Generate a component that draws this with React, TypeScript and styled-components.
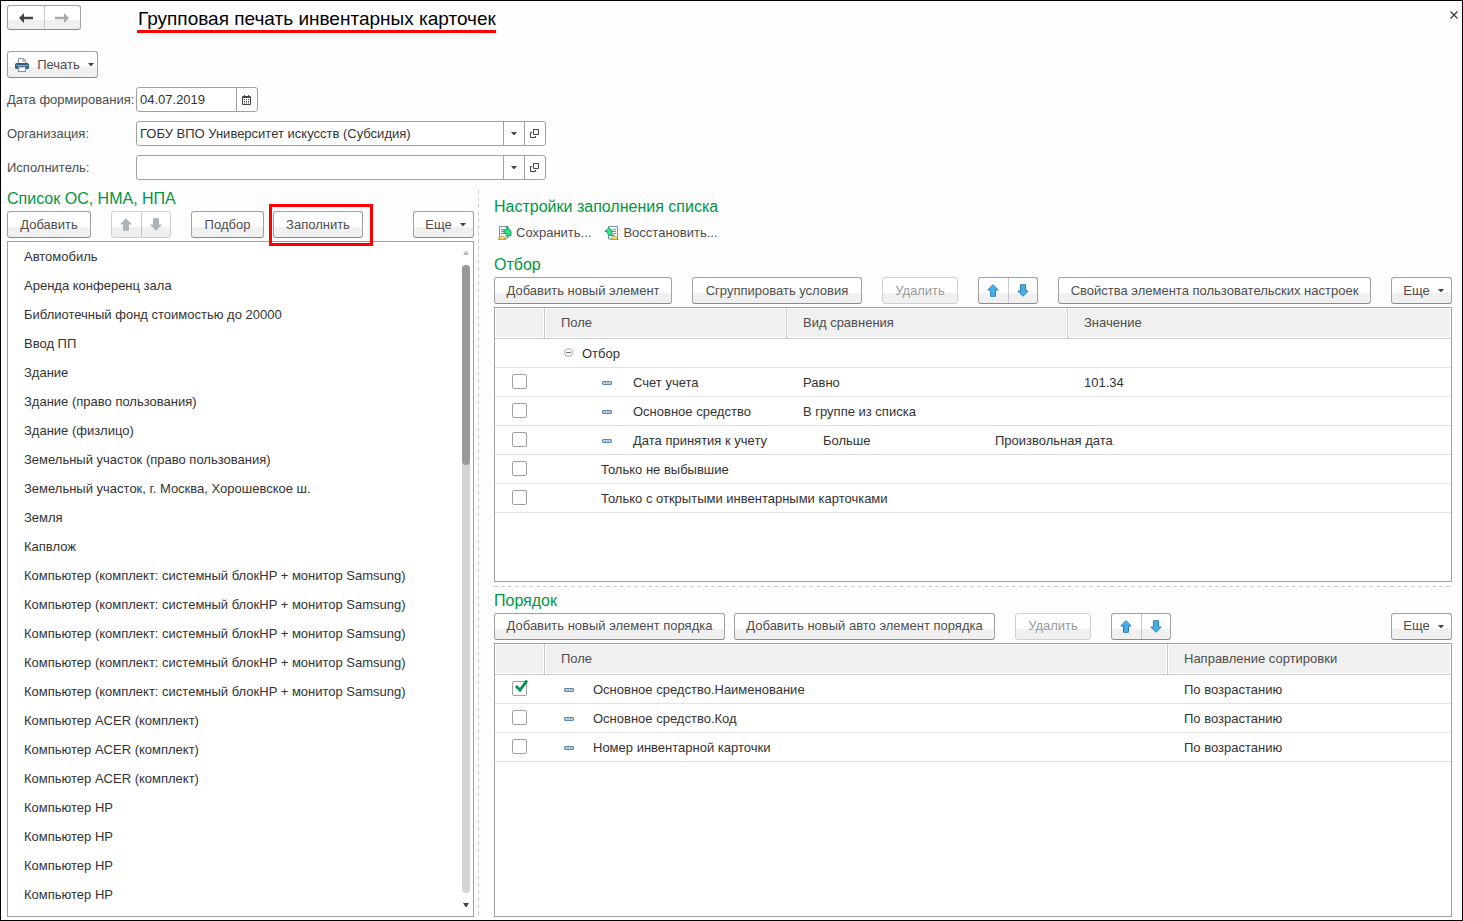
import React from "react";
import styled, { createGlobalStyle, css } from "styled-components";

const line = "#a0a0a0";
const softLine = "#c8c8c8";
const rowLine = "#e2e2e2";
const green = "#009646";
const ink = "#333333";
const inkSoft = "#4d4d4d";

const GlobalStyle = createGlobalStyle`
  *, *::before, *::after { box-sizing: border-box; }
  body {
    margin: 0;
    background: #fff;
    color: ${ink};
    font: 13px/16px "Liberation Sans", Arial, sans-serif;
  }
  button, input { font: inherit; color: inherit; }
`;

const Window = styled.div`
  display: flex;
  flex-direction: column;
  min-height: 100vh;
  padding: 4px 10px 3px 6px;
  border: 1px solid #000;
  background: #fdfdfd;
`;

const TitleBar = styled.header`
  display: flex;
  align-items: flex-start;
  height: 46px;
`;

const Title = styled.h1`
  margin: 0 0 0 56px;
  padding: 3px 0 0 1px;
  border-bottom: 3px solid #f00;
  color: #000;
  font-size: 19px;
  font-weight: 400;
  line-height: 22px;
`;

const CloseButton = styled.button`
  display: flex;
  margin: 6px -6px 0 auto;
  padding: 0;
  border: 0;
  background: none;
`;

const face = css`
  border: 1px solid ${line};
  border-bottom-color: #8a8a8a;
  border-radius: 3px;
  background: linear-gradient(#fff 0 62%, #f0f0f0 62% 100%);
`;

const Button = styled.button<{ $width: number }>`
  ${face}
  display: flex;
  flex: none;
  align-items: center;
  justify-content: center;
  width: ${(p) => p.$width}px;
  height: 27px;
  padding: 0;
  color: ${inkSoft};
  white-space: nowrap;
  &:disabled {
    border-color: #d0d0d0;
    color: #999;
  }
`;

const MenuButton = styled(Button)`
  gap: 8px;
  padding-left: 4px;
`;

const Pair = styled.div<{ $width: number; $height: number; $muted?: boolean }>`
  ${face}
  display: flex;
  flex: none;
  width: ${(p) => p.$width}px;
  height: ${(p) => p.$height}px;
  ${(p) => p.$muted && "border-color: #d0d0d0;"}
`;

const PairButton = styled.button`
  display: flex;
  flex: 1;
  align-items: center;
  justify-content: center;
  padding: 0;
  border: 0;
  background: none;
  & + & {
    border-left: 1px solid ${softLine};
  }
`;

const Fields = styled.div`
  display: grid;
  grid-template-columns: 129px 410px;
  grid-auto-rows: 25px;
  row-gap: 9px;
  align-items: center;
  margin-top: 9px;
`;

const Label = styled.label`
  color: ${inkSoft};
`;

const Field = styled.div<{ $width: number }>`
  display: flex;
  width: ${(p) => p.$width}px;
  height: 25px;
  border: 1px solid ${line};
  border-radius: 3px;
  background: #fff;
`;

const FieldInput = styled.input`
  flex: 1;
  min-width: 0;
  padding: 0 3px;
  border: 0;
  outline: 0;
  background: none;
`;

const FieldButton = styled.button`
  display: flex;
  flex: none;
  align-items: center;
  justify-content: center;
  width: 21px;
  padding: 0 1px 0 0;
  border: 0;
  border-left: 1px solid ${line};
  background: none;
`;

const Panes = styled.main`
  display: grid;
  flex: 1;
  grid-template-columns: minmax(0, 467fr) 20px minmax(0, 958fr);
  margin-top: 10px;
`;

const Splitter = styled.div`
  width: 1px;
  margin-left: 4px;
  background: repeating-linear-gradient(#d0d0d0 0 4px, transparent 4px 7px);
`;

const HorizontalSplitter = styled.div`
  height: 1px;
  margin: 4px 0 5px;
  background: repeating-linear-gradient(90deg, #d0d0d0 0 4px, transparent 4px 7px);
`;

const Column = styled.section`
  display: flex;
  flex-direction: column;
  min-width: 0;
`;

const SettingsColumn = styled(Column)`
  padding-top: 8px;
`;

const Heading = styled.h2`
  margin: 0;
  color: ${green};
  font-size: 16px;
  font-weight: 400;
  line-height: 18px;
`;

const Toolbar = styled.div`
  display: flex;
  align-items: flex-start;
  gap: 20px;
  height: 30px;
  margin-top: 3px;
  & > :last-child {
    margin-left: auto;
  }
`;

const ButtonSet = styled.div`
  display: flex;
  gap: 9px;
`;

const Marked = styled.div`
  position: relative;
  &::after {
    content: "";
    position: absolute;
    inset: -7px -10px -8px -4px;
    border: 3px solid #f00;
    pointer-events: none;
  }
`;

const ListFrame = styled.div`
  display: flex;
  flex: 1;
  border: 1px solid ${line};
  background: #fff;
`;

const List = styled.ul`
  flex: 1;
  margin: 0;
  padding: 0;
  list-style: none;
`;

const ListItem = styled.li`
  padding-left: 16px;
  line-height: 29px;
`;

const ScrollBar = styled.div`
  display: flex;
  flex-direction: column;
  align-items: center;
  width: 14px;
  padding: 9px 0;
`;

const ScrollTrack = styled.div`
  flex: 1;
  width: 8px;
  margin: 10px 0;
  border-radius: 4px;
  background: #d4d4d4;
`;

const ScrollThumb = styled.div`
  height: 200px;
  border-radius: 4px;
  background: #999;
`;

const SettingsLinks = styled.div`
  display: flex;
  gap: 13px;
  height: 16px;
  margin: 9px 0 15px 3px;
`;

const SettingsLink = styled.a`
  display: flex;
  align-items: center;
  gap: 3px;
  color: ${inkSoft};
  text-decoration: none;
`;

const TableFrame = styled.div`
  flex: 1 1 0;
  border: 1px solid ${line};
  background: #fff;
`;

const Table = styled.table`
  width: 100%;
  table-layout: fixed;
  border-collapse: separate;
  border-spacing: 0;
`;

const HeadCell = styled.th`
  height: 31px;
  padding: 0 0 0 16px;
  border: 0 solid ${softLine};
  border-width: 0 1px 1px 0;
  background: #f0f0f0;
  box-shadow: inset 0 0 0 1px #fff;
  color: ${inkSoft};
  font-weight: 400;
  text-align: left;
  &:last-child {
    border-right-width: 0;
  }
`;

const Cell = styled.td<{ $indent?: number }>`
  height: 29px;
  padding: 2px 0 0 ${(p) => p.$indent ?? 16}px;
  border-bottom: 1px solid ${rowLine};
  white-space: nowrap;
`;

const Entry = styled.div<{ $gap: number }>`
  display: flex;
  align-items: center;
  gap: ${(p) => p.$gap}px;
`;

const PeriodCondition = styled.div`
  display: grid;
  grid-template-columns: 172px auto;
  padding-left: 20px;
`;

const CheckWrap = styled.span`
  position: relative;
  display: block;
  width: 15px;
  height: 15px;
  margin-bottom: 3px;
  svg {
    position: absolute;
    left: 2px;
    top: -2px;
    pointer-events: none;
  }
`;

const CheckInput = styled.input`
  display: block;
  width: 15px;
  height: 15px;
  margin: 0;
  appearance: none;
  border: 1px solid ${line};
  border-radius: 2px;
  background: #fff;
`;

function Check({ label, checked = false }: { label: string; checked?: boolean }) {
  const [on, setOn] = React.useState(checked);
  return (
    <CheckWrap>
      <CheckInput type="checkbox" aria-label={label} checked={on} onChange={() => setOn(!on)} />
      {on && (
        <svg width="15" height="14" viewBox="0 0 15 14">
          <path d="M2 7l4 4L13 1.500" fill="none" stroke={green} strokeWidth="2.800" />
        </svg>
      )}
    </CheckWrap>
  );
}

const Caret = () => (
  <svg width="6" height="3" viewBox="0 0 6 3">
    <path d="M0 0h6L3.500 3h-1z" fill="#444" />
  </svg>
);

const NavArrow = ({ back, color }: { back?: boolean; color: string }) => (
  <svg width="14" height="10" viewBox="0 0 14 10">
    <path
      d={back ? "M0 5L5 0V3.800H14V6.200H5V10z" : "M14 5L9 0V3.800H0V6.200H9V10z"}
      fill={color}
    />
  </svg>
);

const MoveArrow = ({ down, muted }: { down?: boolean; muted?: boolean }) => (
  <svg width="12" height="13" viewBox="0 0 12 13">
    <path
      d={down ? "M6 12.300L0.800 7H3.500V0.700H8.500V7H11.200z" : "M6 0.700L11.200 6H8.500V12.300H3.500V6H0.800z"}
      fill={muted ? "#a9b4bb" : "#45b0ea"}
      stroke={muted ? "#a9b4bb" : "#2f7fb5"}
    />
  </svg>
);

const PrinterIcon = () => (
  <svg width="14" height="14" viewBox="0 0 14 14">
    <path d="M3.500 6V0.500H8.500L10.500 2.500V6" fill="#fff" stroke="#8794a0" />
    <path d="M8 0.500V3H10.500" fill="none" stroke="#8794a0" />
    <rect x="0" y="5" width="14" height="6" rx="1.500" fill="#2f5f85" />
    <path d="M1 7.500H13" stroke="#7fa6c4" />
    <rect x="3.500" y="9" width="7" height="4.500" fill="#fff" stroke="#8794a0" />
  </svg>
);

const CalendarIcon = () => (
  <svg width="9" height="10" viewBox="0 0 9 10">
    <path d="M0.500 1.500H8.500V9.500H0.500z" fill="#fff" stroke="#444" />
    <path d="M0 2.500H9M2.500 0V2M6.500 0V2" stroke="#444" />
    <path d="M2 4.500H7.500M2 6.500H7.500M2 8H7.500" stroke="#444" strokeDasharray="1 1" />
  </svg>
);

const OpenIcon = () => (
  <svg width="9" height="9" viewBox="0 0 9 9">
    <path d="M3.500 0.500H8.500V5.500H3.500zM2 3.500H0.500V8.500H5.500V7" fill="none" stroke="#444" />
  </svg>
);

const CloseIcon = () => (
  <svg width="8" height="8" viewBox="0 0 8 8">
    <path d="M0.500 0.500L7.500 7.500M7.500 0.500L0.500 7.500" stroke="#333" strokeWidth="1.100" />
  </svg>
);

const ScrollArrow = ({ down }: { down?: boolean }) => (
  <svg width="6" height="4" viewBox="0 0 6 4">
    <path d={down ? "M0 0H6L3.500 4H2.500z" : "M0 4H6L3.500 0H2.500z"} fill={down ? "#444" : "#bbb"} />
  </svg>
);

const SettingsIcon = ({ restore }: { restore?: boolean }) => (
  <svg width="16" height="16" viewBox="0 0 16 16">
    <path d={restore ? "M4.500 1.500H13.500V14H4.500z" : "M2.500 1.500H11V13H2.500z"} fill="#f4f8fa" stroke="#7d929c" />
    <path d={restore ? "M9 4.500H12M9 6.500H12M9 8.500H12" : "M4 4.500H7M4 6.500H7M4 8.500H7"} stroke="#7d929c" />
    {restore ? (
      <path d="M5 2.500L9 6.500H7.500C7.500 8.500 8 9.500 9.500 10.500C6 11.500 3.500 10 3 6.500H0.800z" fill="#2fe08a" stroke="#12864a" strokeWidth="0.800" />
    ) : (
      <path d="M9.500 1.500L13 5C14.500 7 14.500 9 13.500 11H8.500C10 10.500 10.500 9.500 10 8.500H7V5L9.500 4.500z" fill="#2fe08a" stroke="#12864a" strokeWidth="0.800" />
    )}
    <path d={restore ? "M10.500 10.500L14.500 14.500H6.500z" : "M5 10.500L9 14.500H1z"} fill="#fbdc63" stroke="#b8912a" strokeWidth="0.800" />
  </svg>
);

const DashIcon = () => (
  <svg width="10" height="4" viewBox="0 0 10 4">
    <rect x="0.500" y="0.500" width="9" height="3" rx="0.500" fill="#b4cad9" stroke="#5f89a8" />
  </svg>
);

const CollapseIcon = () => (
  <svg width="9" height="12" viewBox="0 0 9 12">
    <circle cx="4.500" cy="4.500" r="4" fill="#fff" stroke="#aaa" />
    <path d="M2 4.500H7" stroke="#777" />
  </svg>
);

const MoveButtons = ({ muted }: { muted?: boolean }) => (
  <Pair $width={60} $height={27} $muted={muted}>
    <PairButton aria-label="Вверх" disabled={muted}><MoveArrow muted={muted} /></PairButton>
    <PairButton aria-label="Вниз" disabled={muted}><MoveArrow down muted={muted} /></PairButton>
  </Pair>
);

const More = () => (
  <MenuButton $width={61}>Еще<Caret /></MenuButton>
);

const Combo = ({ id, value }: { id: string; value: string }) => (
  <Field $width={410}>
    <FieldInput id={id} defaultValue={value} />
    <FieldButton aria-label="Выбрать"><Caret /></FieldButton>
    <FieldButton aria-label="Открыть"><OpenIcon /></FieldButton>
  </Field>
);

const assets = [
  "Автомобиль",
  "Аренда конференц зала",
  "Библиотечный фонд стоимостью до 20000",
  "Ввод ПП",
  "Здание",
  "Здание (право пользования)",
  "Здание (физлицо)",
  "Земельный участок (право пользования)",
  "Земельный участок, г. Москва, Хорошевское ш.",
  "Земля",
  "Капвлож",
  ...Array(5).fill("Компьютер (комплект: системный блокHP + монитор Samsung)"),
  ...Array(3).fill("Компьютер ACER (комплект)"),
  ...Array(4).fill("Компьютер HP"),
];

const filters = [
  { field: "Счет учета", kind: "Равно", value: "101.34" },
  { field: "Основное средство", kind: "В группе из списка", value: "" },
  { field: "Дата принятия к учету", kind: "Больше", value: "Произвольная дата", period: true },
];

const flags = ["Только не выбывшие", "Только с открытыми инвентарными карточками"];

const orders = [
  { field: "Основное средство.Наименование", on: true },
  { field: "Основное средство.Код", on: false },
  { field: "Номер инвентарной карточки", on: false },
];

export default function App() {
  return (
    <Window>
      <GlobalStyle />
      <TitleBar>
        <Pair $width={74} $height={25}>
          <PairButton aria-label="Назад"><NavArrow back color="#444" /></PairButton>
          <PairButton aria-label="Вперед"><NavArrow color="#aaa" /></PairButton>
        </Pair>
        <Title>Групповая печать инвентарных карточек</Title>
        <CloseButton aria-label="Закрыть"><CloseIcon /></CloseButton>
      </TitleBar>

      <MenuButton $width={91}><PrinterIcon />Печать<Caret /></MenuButton>

      <Fields>
        <Label htmlFor="date">Дата формирования:</Label>
        <Field $width={122}>
          <FieldInput id="date" defaultValue="04.07.2019" />
          <FieldButton aria-label="Календарь"><CalendarIcon /></FieldButton>
        </Field>
        <Label htmlFor="org">Организация:</Label>
        <Combo id="org" value="ГОБУ ВПО Университет искусств (Субсидия)" />
        <Label htmlFor="person">Исполнитель:</Label>
        <Combo id="person" value="" />
      </Fields>

      <Panes>
        <Column>
          <Heading>Список ОС, НМА, НПА</Heading>
          <Toolbar>
            <Button $width={84}>Добавить</Button>
            <MoveButtons muted />
            <ButtonSet>
              <Button $width={73}>Подбор</Button>
              <Marked><Button $width={90}>Заполнить</Button></Marked>
            </ButtonSet>
            <More />
          </Toolbar>
          <ListFrame>
            <List>
              {assets.map((name, i) => <ListItem key={i}>{name}</ListItem>)}
            </List>
            <ScrollBar>
              <ScrollArrow />
              <ScrollTrack><ScrollThumb /></ScrollTrack>
              <ScrollArrow down />
            </ScrollBar>
          </ListFrame>
        </Column>

        <Splitter />

        <SettingsColumn>
          <Heading>Настройки заполнения списка</Heading>
          <SettingsLinks>
            <SettingsLink href="#save"><SettingsIcon />Сохранить...</SettingsLink>
            <SettingsLink href="#restore"><SettingsIcon restore />Восстановить...</SettingsLink>
          </SettingsLinks>

          <Heading>Отбор</Heading>
          <Toolbar>
            <Button $width={178}>Добавить новый элемент</Button>
            <Button $width={170}>Сгруппировать условия</Button>
            <Button $width={76} disabled>Удалить</Button>
            <MoveButtons />
            <Button $width={313}>Свойства элемента пользовательских настроек</Button>
            <More />
          </Toolbar>
          <TableFrame>
            <Table>
              <colgroup>
                <col width="50" /><col width="242" /><col width="281" /><col />
              </colgroup>
              <thead>
                <tr>
                  <HeadCell aria-label="Использование" />
                  <HeadCell>Поле</HeadCell>
                  <HeadCell>Вид сравнения</HeadCell>
                  <HeadCell>Значение</HeadCell>
                </tr>
              </thead>
              <tbody>
                <tr>
                  <Cell />
                  <Cell colSpan={3} $indent={19}><Entry $gap={9}><CollapseIcon />Отбор</Entry></Cell>
                </tr>
                {filters.map((f) => (
                  <tr key={f.field}>
                    <Cell $indent={17}><Check label={f.field} /></Cell>
                    <Cell $indent={57}><Entry $gap={21}><DashIcon />{f.field}</Entry></Cell>
                    {f.period ? (
                      <Cell colSpan={2}>
                        <PeriodCondition><span>{f.kind}</span><span>{f.value}</span></PeriodCondition>
                      </Cell>
                    ) : (
                      <>
                        <Cell>{f.kind}</Cell>
                        <Cell>{f.value}</Cell>
                      </>
                    )}
                  </tr>
                ))}
                {flags.map((name) => (
                  <tr key={name}>
                    <Cell $indent={17}><Check label={name} /></Cell>
                    <Cell colSpan={3} $indent={56}>{name}</Cell>
                  </tr>
                ))}
              </tbody>
            </Table>
          </TableFrame>

          <HorizontalSplitter />

          <Heading>Порядок</Heading>
          <Toolbar>
            <ButtonSet>
              <Button $width={231}>Добавить новый элемент порядка</Button>
              <Button $width={261}>Добавить новый авто элемент порядка</Button>
            </ButtonSet>
            <Button $width={76} disabled>Удалить</Button>
            <MoveButtons />
            <More />
          </Toolbar>
          <TableFrame>
            <Table>
              <colgroup>
                <col width="50" /><col /><col width="283" />
              </colgroup>
              <thead>
                <tr>
                  <HeadCell aria-label="Использование" />
                  <HeadCell>Поле</HeadCell>
                  <HeadCell>Направление сортировки</HeadCell>
                </tr>
              </thead>
              <tbody>
                {orders.map((o) => (
                  <tr key={o.field}>
                    <Cell $indent={17}><Check label={o.field} checked={o.on} /></Cell>
                    <Cell $indent={19}><Entry $gap={19}><DashIcon />{o.field}</Entry></Cell>
                    <Cell>По возрастанию</Cell>
                  </tr>
                ))}
              </tbody>
            </Table>
          </TableFrame>
        </SettingsColumn>
      </Panes>
    </Window>
  );
}
